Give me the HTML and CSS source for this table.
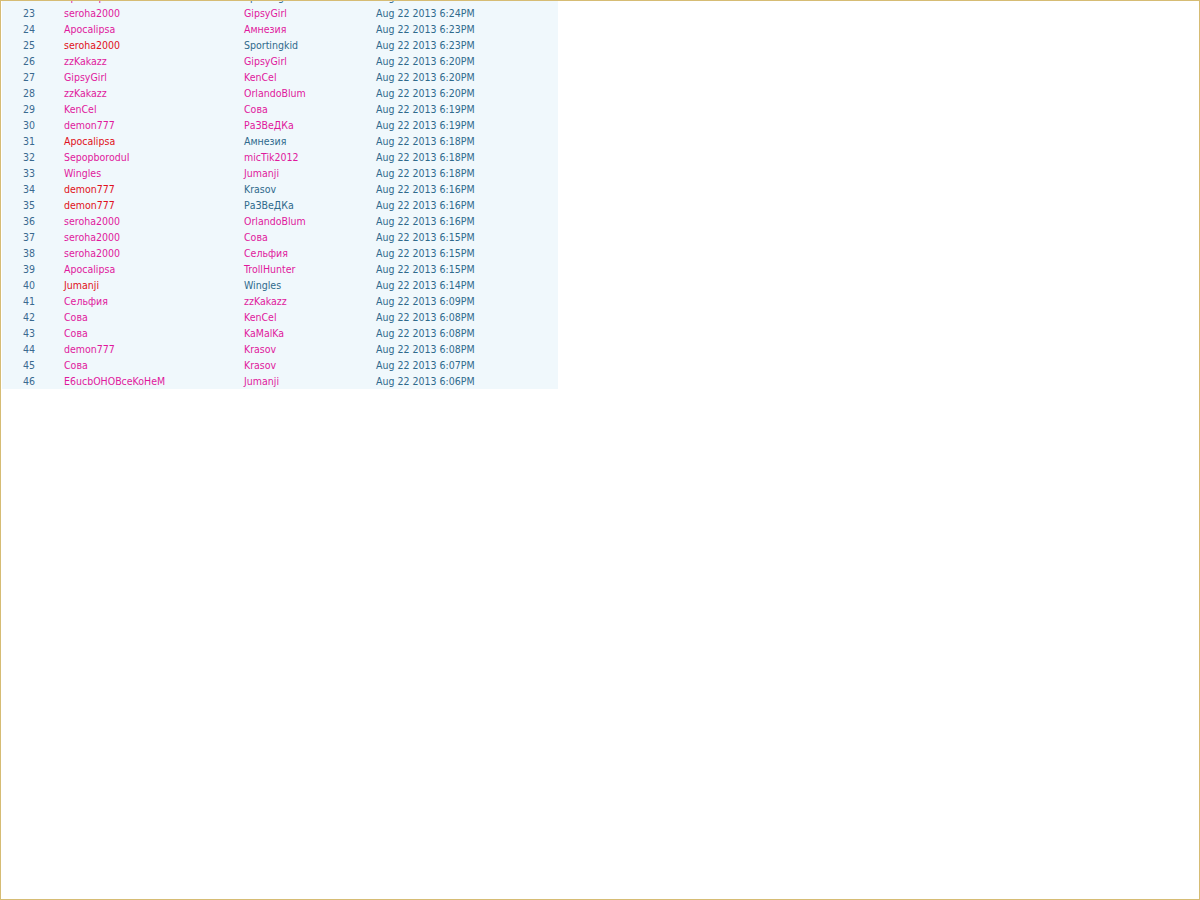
FILE: index.html
```html
<!DOCTYPE html>
<html>
<head>
<meta charset="utf-8">
<link rel="stylesheet" href="styles.css">
</head>
<body>
<div class="frame">
<table class="log">
<tr><td class="n">22</td><td class="p">Apocalipsa</td><td class="b">Sportingkid</td><td class="d">Aug 22 2013 6:24PM</td></tr>
<tr><td class="n">23</td><td class="p">seroha2000</td><td class="p">GipsyGirl</td><td class="d">Aug 22 2013 6:24PM</td></tr>
<tr><td class="n">24</td><td class="p">Apocalipsa</td><td class="p">Амнезия</td><td class="d">Aug 22 2013 6:23PM</td></tr>
<tr><td class="n">25</td><td class="r">seroha2000</td><td class="b">Sportingkid</td><td class="d">Aug 22 2013 6:23PM</td></tr>
<tr><td class="n">26</td><td class="p">zzKakazz</td><td class="p">GipsyGirl</td><td class="d">Aug 22 2013 6:20PM</td></tr>
<tr><td class="n">27</td><td class="p">GipsyGirl</td><td class="p">KenCel</td><td class="d">Aug 22 2013 6:20PM</td></tr>
<tr><td class="n">28</td><td class="p">zzKakazz</td><td class="p">OrlandoBlum</td><td class="d">Aug 22 2013 6:20PM</td></tr>
<tr><td class="n">29</td><td class="p">KenCel</td><td class="p">Сова</td><td class="d">Aug 22 2013 6:19PM</td></tr>
<tr><td class="n">30</td><td class="p">demon777</td><td class="p">РаЗВеДКа</td><td class="d">Aug 22 2013 6:19PM</td></tr>
<tr><td class="n">31</td><td class="r">Apocalipsa</td><td class="b">Амнезия</td><td class="d">Aug 22 2013 6:18PM</td></tr>
<tr><td class="n">32</td><td class="p">SepopboroduI</td><td class="p">micTik2012</td><td class="d">Aug 22 2013 6:18PM</td></tr>
<tr><td class="n">33</td><td class="p">Wingles</td><td class="p">Jumanji</td><td class="d">Aug 22 2013 6:18PM</td></tr>
<tr><td class="n">34</td><td class="r">demon777</td><td class="b">Krasov</td><td class="d">Aug 22 2013 6:16PM</td></tr>
<tr><td class="n">35</td><td class="r">demon777</td><td class="b">РаЗВеДКа</td><td class="d">Aug 22 2013 6:16PM</td></tr>
<tr><td class="n">36</td><td class="p">seroha2000</td><td class="p">OrlandoBlum</td><td class="d">Aug 22 2013 6:16PM</td></tr>
<tr><td class="n">37</td><td class="p">seroha2000</td><td class="p">Сова</td><td class="d">Aug 22 2013 6:15PM</td></tr>
<tr><td class="n">38</td><td class="p">seroha2000</td><td class="p">Сельфия</td><td class="d">Aug 22 2013 6:15PM</td></tr>
<tr><td class="n">39</td><td class="p">Apocalipsa</td><td class="p">TrollHunter</td><td class="d">Aug 22 2013 6:15PM</td></tr>
<tr><td class="n">40</td><td class="r">Jumanji</td><td class="b">Wingles</td><td class="d">Aug 22 2013 6:14PM</td></tr>
<tr><td class="n">41</td><td class="p">Сельфия</td><td class="p">zzKakazz</td><td class="d">Aug 22 2013 6:09PM</td></tr>
<tr><td class="n">42</td><td class="p">Сова</td><td class="p">KenCel</td><td class="d">Aug 22 2013 6:08PM</td></tr>
<tr><td class="n">43</td><td class="p">Сова</td><td class="p">KaMalKa</td><td class="d">Aug 22 2013 6:08PM</td></tr>
<tr><td class="n">44</td><td class="p">demon777</td><td class="p">Krasov</td><td class="d">Aug 22 2013 6:08PM</td></tr>
<tr><td class="n">45</td><td class="p">Сова</td><td class="p">Krasov</td><td class="d">Aug 22 2013 6:07PM</td></tr>
<tr><td class="n">46</td><td class="p">E6ucbOHOBceKoHeM</td><td class="p">Jumanji</td><td class="d">Aug 22 2013 6:06PM</td></tr>
</table>
</div>
</body>
</html>
```
FILE: styles.css
```css
html, body {
  margin: 0;
  padding: 0;
  background: #ffffff;
}
.frame {
  box-sizing: border-box;
  width: 1200px;
  height: 900px;
  border: 1px solid #d6bc74;
  padding-left: 1px;
  overflow: hidden;
  background: #ffffff;
}
.log {
  border-collapse: collapse;
  width: 556px;
  margin-top: -12px;
  background: #f0f8fc;
  font-family: "DejaVu Sans Condensed", "DejaVu Sans", Tahoma, sans-serif;
  font-stretch: condensed;
  font-size: 10.5px;
  table-layout: fixed;
}
.log td {
  height: 16px;
  padding: 0;
  white-space: nowrap;
  line-height: 16px;
}
.log td.n {
  width: 62px;
  padding-left: 21px;
  box-sizing: border-box;
  color: #3a6a90;
}
.log td:nth-child(2) { width: 180px; }
.log td:nth-child(3) { width: 132px; }
.p { color: #e0189c; }
.r { color: #e01020; }
.b { color: #2f6a8c; }
.d { color: #2f6a8c; }
```
